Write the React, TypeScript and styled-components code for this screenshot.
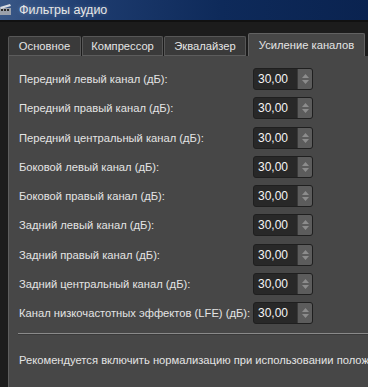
import React from 'react';
import styled, { createGlobalStyle } from 'styled-components';

const GlobalStyle = createGlobalStyle`
  html, body {
    margin: 0;
    padding: 0;
    background: #1c1c1c;
    overflow: hidden;
  }
  body {
    font-family: 'Liberation Sans', Arial, sans-serif;
    font-size: 11.2px;
    color: #e2e2e2;
  }
`;

const Window = styled.div`
  width: 368px;
  height: 387px;
  display: flex;
  flex-direction: column;
  background: #1c1c1c;
  overflow: hidden;
`;

const TitleBar = styled.div`
  height: 20px;
  flex-shrink: 0;
  display: flex;
  align-items: center;
  gap: 7px;
  background: linear-gradient(90deg, #3a5887 0%, #1d3b6e 25%, #0e2a5a 60%, #0a2350 100%);
  border-bottom: 2px solid #111;
`;

const TitleText = styled.span`
  font-size: 12.5px;
  color: #e6e6e6;
  text-shadow: 0 0 4px rgba(255, 255, 255, 0.25);
`;

const Body = styled.div`
  flex: 1;
  display: flex;
  flex-direction: column;
  padding: 10px 0 0 8px;
  min-width: 0;
`;

const TabBar = styled.div`
  display: flex;
  align-items: flex-end;
  height: 24px;
  flex-shrink: 0;
`;

const Tab = styled.div<{ $active?: boolean; $width: number }>`
  width: ${p => p.$width}px;
  height: ${p => (p.$active ? 23 : 20)}px;
  box-sizing: border-box;
  display: flex;
  align-items: center;
  justify-content: center;
  margin-right: ${p => (p.$active ? 0 : 1)}px;
  margin-left: ${p => (p.$active ? 1 : 0)}px;
  background: ${p => (p.$active ? '#474747' : '#3a3a3a')};
  border: 1px solid ${p => (p.$active ? '#626262' : '#575757')};
  border-bottom: ${p => (p.$active ? 'none' : '1px solid #5c5c5c')};
  border-radius: 2px 2px 0 0;
  color: #e4e4e4;
  white-space: nowrap;
`;

const Panel = styled.div`
  flex: 1;
  background: #474747;
  border-left: 1px solid #5e5e5e;
  padding: 12px 0 0 10px;
  display: flex;
  flex-direction: column;
`;

const Grid = styled.div`
  display: grid;
  grid-template-columns: 234px 60px;
  grid-auto-rows: 22px;
  row-gap: 7.3px;
  align-items: center;
`;

const Label = styled.span`
  white-space: nowrap;
  color: #e4e4e4;
`;

const SpinBox = styled.div`
  height: 22px;
  box-sizing: border-box;
  display: flex;
  border: 1px solid #1f1f1f;
  border-radius: 3px;
  overflow: hidden;
  background: #282828;
`;

const SpinValue = styled.div`
  flex: 1;
  display: flex;
  align-items: center;
  padding-left: 4px;
  color: #f4f4f4;
  font-size: 12px;
`;

const SpinButtons = styled.div`
  width: 14px;
  display: flex;
  flex-direction: column;
  align-items: center;
  justify-content: center;
  gap: 2px;
  background: #5c5c5c;
  border-left: 1px solid #3a3a3a;
`;

const Separator = styled.div`
  margin: 9px 0 0 -1px;
  height: 1px;
  background: #8a8a8a;
  border-bottom: 1px solid #3a3a3a;
`;

const Note = styled.div`
  margin-top: 19px;
  white-space: nowrap;
  color: #e4e4e4;
`;

const Arrow: React.FC<{ up?: boolean }> = ({ up }) => (
  <svg width="7" height="4" viewBox="0 0 7 4">
    <path d={up ? 'M0 4 L3.5 0 L7 4 Z' : 'M0 0 L3.5 4 L7 0 Z'} fill="#8c8c8c" />
  </svg>
);

const AppIcon: React.FC = () => (
  <svg width="12" height="12" viewBox="0 0 12 12">
    <rect x="0" y="4" width="11" height="7" fill="#9aa0aa" />
    <rect x="1" y="5" width="2" height="2" fill="#2a2a2a" />
    <rect x="4" y="5" width="2" height="2" fill="#2a2a2a" />
    <rect x="7" y="5" width="2" height="2" fill="#2a2a2a" />
    <path d="M0 3 L10 0 L11 2 L1 5 Z" fill="#d8dce2" />
  </svg>
);

const channels = [
  'Передний левый канал (дБ):',
  'Передний правый канал (дБ):',
  'Передний центральный канал (дБ):',
  'Боковой левый канал (дБ):',
  'Боковой правый канал (дБ):',
  'Задний левый канал (дБ):',
  'Задний правый канал (дБ):',
  'Задний центральный канал (дБ):',
  'Канал низкочастотных эффектов (LFE) (дБ):',
];

const tabs = [
  { title: 'Основное', width: 73 },
  { title: 'Компрессор', width: 81 },
  { title: 'Эквалайзер', width: 82 },
  { title: 'Усиление каналов', width: 117 },
];

export default function App() {
  return (
    <Window>
      <GlobalStyle />
      <TitleBar>
        <AppIcon />
        <TitleText>Фильтры аудио</TitleText>
      </TitleBar>
      <Body>
        <TabBar>
          {tabs.map((t, i) => (
            <Tab key={t.title} $width={t.width} $active={i === 3}>{t.title}</Tab>
          ))}
        </TabBar>
        <Panel>
          <Grid>
            {channels.map(c => (
              <React.Fragment key={c}>
                <Label>{c}</Label>
                <SpinBox>
                  <SpinValue>30,00</SpinValue>
                  <SpinButtons>
                    <Arrow up />
                    <Arrow />
                  </SpinButtons>
                </SpinBox>
              </React.Fragment>
            ))}
          </Grid>
          <Separator />
          <Note>Рекомендуется включить нормализацию при использовании положительных значений усиления.</Note>
        </Panel>
      </Body>
    </Window>
  );
}
